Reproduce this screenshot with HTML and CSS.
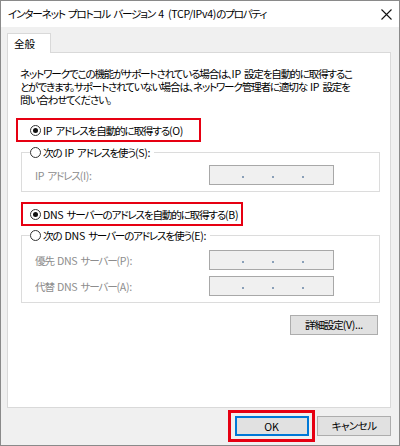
FILE: index.html
```html
<!DOCTYPE html>
<html lang="ja">
<head>
<meta charset="utf-8">
<link rel="stylesheet" href="styles.css">
</head>
<body>
<div class="window">
  <div class="titlebar">
    <span class="title">インターネット プロトコル バージョン <span class="en">4 (TCP/IPv4)</span>のプロパティ</span>
    <svg class="close" width="11" height="11" viewBox="0 0 11 11"><path d="M0.5 0.5L10.5 10.5M10.5 0.5L0.5 10.5" stroke="#111" stroke-width="1.1" fill="none"/></svg>
  </div>
  <div class="main">
    <div class="tabs"><div class="tab">全般</div></div>
    <div class="panel">
      <p class="desc">ネットワークでこの機能がサポートされている場合は、<span class="en">IP</span> 設定を自動的に取得するこ<br>とができます。サポートされていない場合は、ネットワーク管理者に適切な <span class="en">IP</span> 設定を<br>問い合わせてください。</p>
      <div class="mark mark1"><span class="radio on"></span><span><span class="en">IP</span> アドレスを自動的に取得する<span class="en">(O)</span></span></div>
      <fieldset class="group g1">
        <legend><span class="radio"></span><span>次の <span class="en">IP</span> アドレスを使う<span class="en">(S):</span></span></legend>
        <div class="row first"><span class="lbl"><span class="en">IP</span> アドレス<span class="en">(I):</span></span><span class="ipbox"><i></i><i></i><i></i></span></div>
      </fieldset>
      <div class="mark mark2"><span class="radio on"></span><span><span class="en">DNS</span> サーバーのアドレスを自動的に取得する<span class="en">(B)</span></span></div>
      <fieldset class="group g2">
        <legend><span class="radio"></span><span>次の <span class="en">DNS</span> サーバーのアドレスを使う<span class="en">(E):</span></span></legend>
        <div class="row first"><span class="lbl">優先 <span class="en">DNS</span> サーバー<span class="en">(P):</span></span><span class="ipbox"><i></i><i></i><i></i></span></div>
        <div class="row second"><span class="lbl">代替 <span class="en">DNS</span> サーバー<span class="en">(A):</span></span><span class="ipbox"><i></i><i></i><i></i></span></div>
      </fieldset>
      <div class="adv-row"><button class="btn adv">詳細設定<span class="en">(V)...</span></button></div>
    </div>
    <div class="footer">
      <div class="mark-ok"><button class="btn ok">OK</button></div>
      <button class="btn cancel">キャンセル</button>
    </div>
  </div>
</div>
</body>
</html>
```

FILE: styles.css
```css
* { box-sizing: border-box; }
html, body { margin: 0; padding: 0; background: #fff; }
body {
  font-family: "Noto Sans CJK JP", "Noto Sans", sans-serif;
  font-size: 10.6px;
  letter-spacing: -1.2px;
  word-spacing: 2px;
  font-feature-settings: "palt";
  color: #000;
  white-space: nowrap;
}
.en { letter-spacing: -0.3px; }
.window {
  width: 400px;
  height: 446px;
  border: 1px solid #8a8a8a;
  background: #f0f0f0;
  display: flex;
  flex-direction: column;
}
.titlebar {
  height: 26px;
  background: #fff;
  display: flex;
  align-items: center;
  justify-content: space-between;
  padding: 0 7px 0 7px;
  flex: none;
}
.title { line-height: 14px; }
.close { display: block; }
.main {
  flex: 1;
  padding: 6px 8px 0 6px;
  display: flex;
  flex-direction: column;
}
.tabs { display: flex; height: 19px; position: relative; z-index: 1; }
.tab {
  width: 44px;
  height: 20px;
  background: #fff;
  border: 1px solid #d9d9d9;
  border-bottom: none;
  padding-left: 6px;
  line-height: 19px;
  letter-spacing: 0;
}
.panel {
  height: 356px;
  background: #fff;
  border: 1px solid #d9d9d9;
  padding: 0;
}
.desc {
  margin: 14px 0 0 12px;
  line-height: 13px;
}
.mark {
  border: 2px solid #e60012;
  height: 24px;
  display: flex;
  align-items: center;
  gap: 2px;
}
.mark1 { margin: 12px 0 0 8px; width: 185px; padding-left: 12px; }
.mark2 { margin: 10px 0 0 13px; width: 222px; padding-left: 7px; }
.radio {
  width: 11px;
  height: 11px;
  border: 1px solid #333;
  border-radius: 50%;
  background: #fff;
  display: inline-flex;
  align-items: center;
  justify-content: center;
  flex: none;
}
.radio.on::after {
  content: "";
  width: 5px;
  height: 5px;
  border-radius: 50%;
  background: #111;
}
.group {
  margin: 4px 0 0 13px;
  width: 359px;
  border: 1px solid #dcdcdc;
  padding: 0 0 6px 0;
}
.group legend {
  margin-left: 8px;
  padding: 0 4px 0 0;
  display: flex;
  align-items: center;
  gap: 2px;
  line-height: 13px;
}
.g2 { margin-top: 3px; padding-bottom: 6px; }
.row {
  display: grid;
  grid-template-columns: 174px 125px;
  align-items: center;
  padding-left: 13px;
}
.row.first { margin-top: 6px; }
.g2 .row.first { margin-top: 8px; }
.row.second { margin-top: 6px; }
.lbl { color: #8d8d8d; }
.ipbox {
  height: 20px;
  border: 1px solid #a8a8a8;
  background: #f0f0f0;
  display: flex;
  padding-left: 32px;
  gap: 28px;
  align-items: center;
  padding-top: 3px;
}
.ipbox i {
  width: 2px;
  height: 2px;
  background: #8aa0b8;
}
.adv-row {
  display: flex;
  justify-content: flex-end;
  margin: 12px 12px 0 0;
}
.btn {
  font: inherit;
  letter-spacing: inherit;
  word-spacing: inherit;
  color: #000;
  background: #e1e1e1;
  border: 1px solid #adadad;
  height: 20px;
  padding: 0;
  line-height: 18px;
}
.adv { width: 88px; }
.footer {
  display: flex;
  justify-content: flex-end;
  align-items: center;
  gap: 2px;
  padding: 2px 0 0 0;
}
.mark-ok {
  border: 3px solid #e60012;
  padding: 3px;
  width: 87px;
  height: 32px;
  display: flex;
  justify-content: center;
}
.ok {
  width: 74px;
  border: 2px solid #0078d7;
  letter-spacing: 0;
}
.cancel { width: 74px; letter-spacing: -0.6px; }
```
